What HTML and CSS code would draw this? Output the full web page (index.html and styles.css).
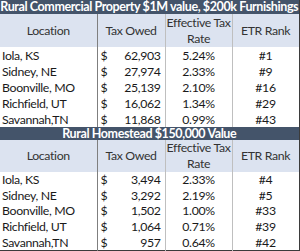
FILE: index.html
```html
<!DOCTYPE html>
<html>
<head>
<meta charset="utf-8">
<link rel="stylesheet" href="styles.css">
</head>
<body>
<table class="tax">
  <colgroup>
    <col class="c-loc"><col class="c-tax"><col class="c-etr"><col class="c-rank">
  </colgroup>
  <tr class="title"><td colspan="4">Rural Commercial Property $1M value, $200k Furnishings</td></tr>
  <tr class="head">
    <td class="loc">Location</td><td class="tax-h">Tax Owed</td><td class="etr">Effective Tax<br>Rate</td><td class="rank">ETR Rank</td>
  </tr>
  <tr class="r1"><td class="loc">Iola, KS</td><td class="money"><span class="cur">$</span><span class="amt">62,903</span></td><td class="etr">5.24%</td><td class="rank">#1</td></tr>
  <tr class="r1"><td class="loc">Sidney, NE</td><td class="money"><span class="cur">$</span><span class="amt">27,974</span></td><td class="etr">2.33%</td><td class="rank">#9</td></tr>
  <tr class="r1"><td class="loc">Boonville, MO</td><td class="money"><span class="cur">$</span><span class="amt">25,139</span></td><td class="etr">2.10%</td><td class="rank">#16</td></tr>
  <tr class="r1"><td class="loc">Richfield, UT</td><td class="money"><span class="cur">$</span><span class="amt">16,062</span></td><td class="etr">1.34%</td><td class="rank">#29</td></tr>
  <tr class="r1"><td class="loc">Savannah,TN</td><td class="money"><span class="cur">$</span><span class="amt">11,868</span></td><td class="etr">0.99%</td><td class="rank">#43</td></tr>
  <tr class="title t2"><td colspan="4">Rural Homestead $150,000 Value</td></tr>
  <tr class="head h2">
    <td class="loc">Location</td><td class="tax-h">Tax Owed</td><td class="etr">Effective Tax<br>Rate</td><td class="rank">ETR Rank</td>
  </tr>
  <tr class="r2"><td class="loc">Iola, KS</td><td class="money"><span class="cur">$</span><span class="amt">3,494</span></td><td class="etr">2.33%</td><td class="rank">#4</td></tr>
  <tr class="r2"><td class="loc">Sidney, NE</td><td class="money"><span class="cur">$</span><span class="amt">3,292</span></td><td class="etr">2.19%</td><td class="rank">#5</td></tr>
  <tr class="r2"><td class="loc">Boonville, MO</td><td class="money"><span class="cur">$</span><span class="amt">1,502</span></td><td class="etr">1.00%</td><td class="rank">#33</td></tr>
  <tr class="r2"><td class="loc">Richfield, UT</td><td class="money"><span class="cur">$</span><span class="amt">1,064</span></td><td class="etr">0.71%</td><td class="rank">#39</td></tr>
  <tr class="r2 last"><td class="loc">Savannah,TN</td><td class="money"><span class="cur">$</span><span class="amt">957</span></td><td class="etr">0.64%</td><td class="rank">#42</td></tr>
</table>
</body>
</html>
```
FILE: styles.css
```css
html, body {
  margin: 0;
  padding: 0;
  background: #ffffff;
}
.tax {
  border-collapse: collapse;
  table-layout: fixed;
  width: 299px;
  font-family: Lato, "Open Sans", sans-serif;
  font-size: 12.3px;
  letter-spacing: -0.35px;
  color: #1a1a1a;
  border-right: 1px solid #3b3b3b;
  border-bottom: 1px solid #3b3b3b;
}
.c-loc { width: 97px; }
.c-tax { width: 68px; }
.c-etr { width: 67px; }
.c-rank { width: 67px; }
.tax td {
  padding: 0;
  line-height: 15px;
  white-space: nowrap;
  overflow: hidden;
}
.title td {
  background: #44546a;
  color: #ffffff;
  font-weight: bold;
  text-align: center;
  height: 14px;
  line-height: 14px;
  font-size: 12.5px;
  letter-spacing: -0.4px;
}
.t2 td { height: 13px; line-height: 13px; }
.head td {
  background: #dce3f0;
  color: #333333;
  height: 33px;
  text-align: center;
  vertical-align: middle;
  line-height: 16px;
}
.h2 td { height: 31px; }
.tax td.loc { border-right: 1px solid #7f7f7f; }
.tax td.money, .tax td.tax-h { border-right: 1px solid #bfbfbf; }
.tax td.etr { border-right: 1px solid #bfbfbf; }
.r1 td { height: 16px; }
.r2 td { height: 15.6px; }
td.loc { padding-left: 2px; text-align: left; }
.head td.loc { text-align: center; padding-left: 0; }
td.money .cur { float: left; padding-left: 3px; }
td.money .amt { float: right; padding-right: 4px; }
td.etr, td.rank { text-align: center; }
```
